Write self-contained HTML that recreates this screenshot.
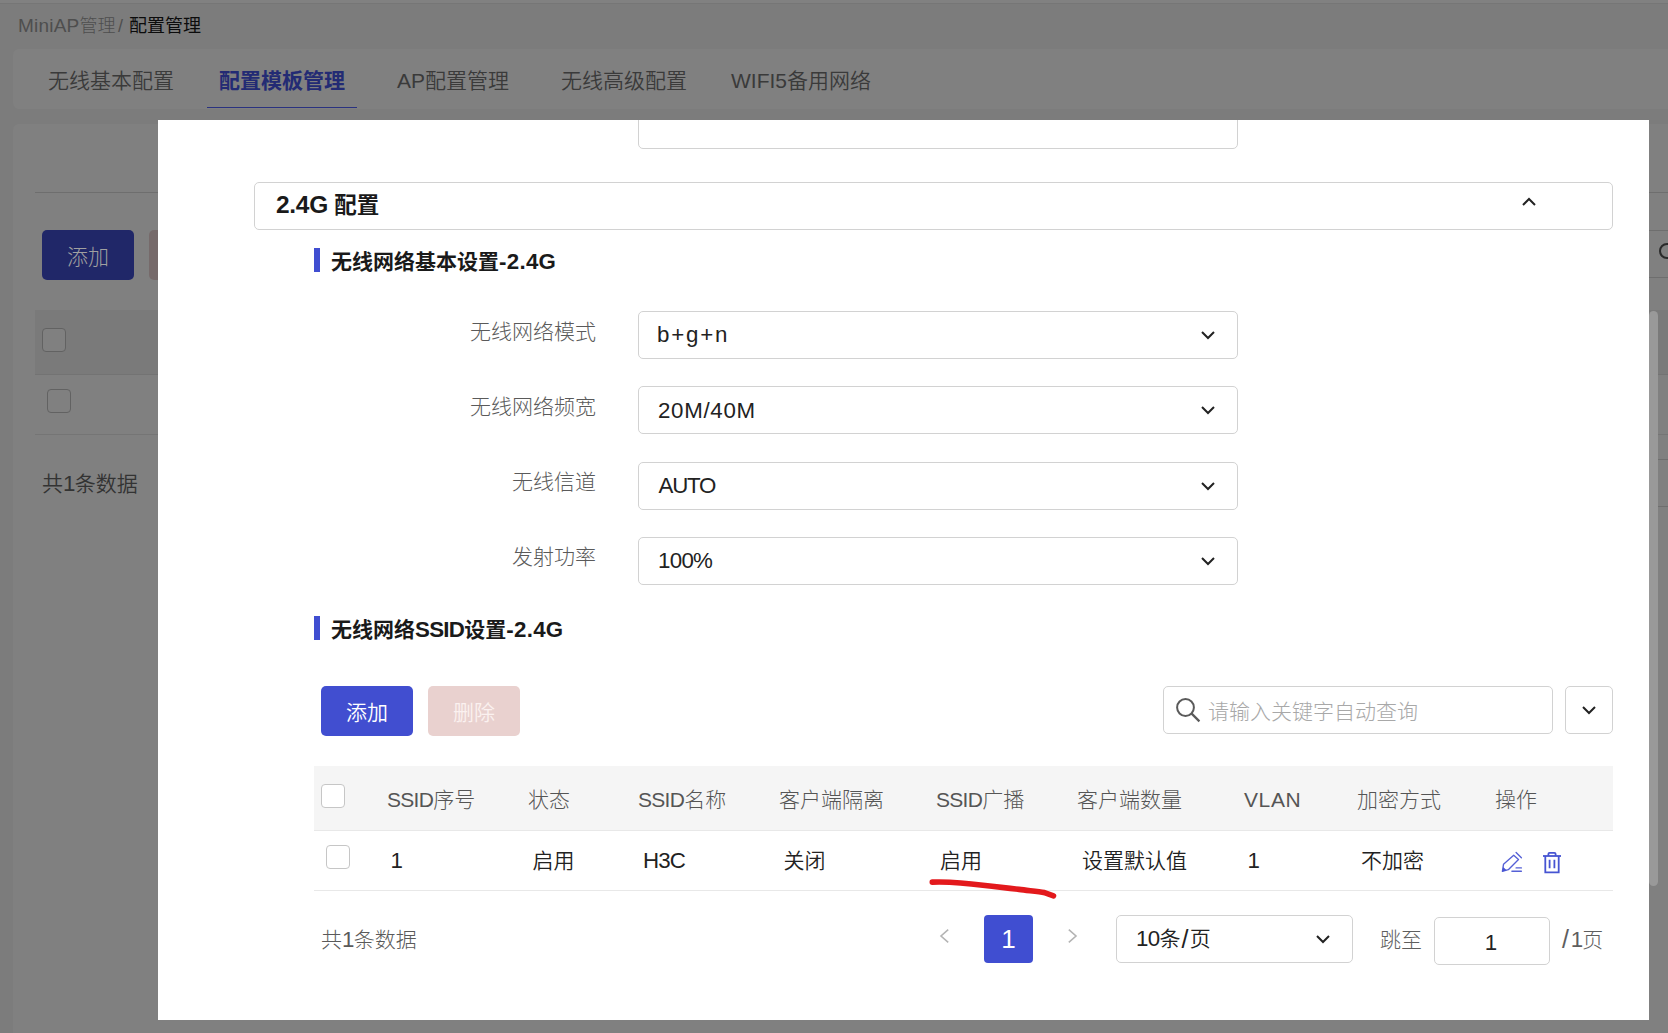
<!DOCTYPE html>
<html lang="zh-CN">
<head>
<meta charset="utf-8">
<title>MiniAP管理 - 配置管理</title>
<style>
*{box-sizing:border-box;margin:0;padding:0}
html,body{width:1668px;height:1033px;overflow:hidden}
body{position:relative;background:#7c7c7c;font-family:"Liberation Sans","Noto Sans CJK SC",sans-serif;font-size:21px;font-weight:300;color:#222;line-height:1}
.abs{position:absolute}
.t{position:absolute;white-space:nowrap;line-height:30px;height:30px}
/* ---------- dimmed background page ---------- */
.topstrip{left:0;top:0;width:1668px;height:3.5px;background:#818181;border-bottom:1px solid #767676}
.crumb{font-size:18px;top:11px}
.tabcard{left:13px;top:49px;width:1668px;height:60px;background:#808080;border-radius:6px}
.tab{top:66px;color:#3a3a3a;font-weight:350}
.tab.act{color:#232b74;font-weight:bold}
.tabline{left:207px;top:106.5px;width:150px;height:1.5px;background:#2a3280}
.card{left:13px;top:124px;width:1668px;height:920px;background:#808080;border-radius:6px}
.hr{height:1px;background:#6e6e6e}
.bgbtn{left:42px;top:230px;width:92px;height:50px;border-radius:5px;background:#202768;color:#a0a0a0;text-align:center;line-height:54px}
.bgbtn2{left:149px;top:230px;width:92px;height:50px;border-radius:5px;background:#766a6a}
.bghead{left:35px;top:310px;width:1640px;height:65px;background:#7a7a7a;border-bottom:1px solid #737373}
.bgck{width:24px;height:24px;border:1px solid #626262;border-radius:4px;background:#808080}
.thumb{left:1649px;top:311px;width:9px;height:575px;background:#999;border-radius:5px}
/* ---------- modal ---------- */
.modal{left:158px;top:120px;width:1491px;height:900px;background:#fff;overflow:hidden}
.modal .t{color:#222;font-weight:350}
.box{position:absolute;border:1px solid #d2d2d2;border-radius:5px;background:#fff}
.lbl{font-weight:300 !important;color:#5a5a5a !important;text-align:right;width:200px}
.bar{width:6px;height:24px;background:#404ed1}
.h{font-weight:bold !important;font-size:21px;color:#1a1a1a !important}
.btn{font-weight:350;border-radius:5px;color:#fff;text-align:center;line-height:54px;height:50px;width:92px}
.ck{width:24px;height:24px;border:1px solid #c6c6c6;border-radius:4px;background:#fff}
.th{color:#555 !important;font-weight:300 !important}
.g{font-weight:300 !important}
.l{font-size:22.3px}
.hl{font-size:22.3px;line-height:0;letter-spacing:.3px}
svg{position:absolute;overflow:visible}
</style>
</head>
<body>
<!-- dimmed page behind the modal -->
<div class="abs topstrip"></div>
<div class="t crumb" style="left:18px;color:#4e4e4e"><span style="letter-spacing:.2px;font-size:19px">MiniAP</span>管理</div>
<div class="t crumb" style="left:118px;color:#4e4e4e">/</div>
<div class="t crumb" style="left:129px;color:#0c0c0c;font-weight:400">配置管理</div>
<div class="abs tabcard"></div>
<div class="t tab" style="left:48px">无线基本配置</div>
<div class="t tab act" style="left:219px">配置模板管理</div>
<div class="t tab" style="left:397px">AP配置管理</div>
<div class="t tab" style="left:561px">无线高级配置</div>
<div class="t tab" style="left:731px">WIFI5备用网络</div>
<div class="abs tabline"></div>
<div class="abs card"></div>
<div class="abs hr" style="left:35px;top:192px;width:1640px"></div>
<div class="abs bgbtn">添加</div>
<div class="abs bgbtn2"></div>
<div class="abs hr" style="left:1649px;top:230px;width:30px"></div>
<div class="abs hr" style="left:1649px;top:277px;width:30px"></div>
<svg style="left:1659px;top:243px" width="16" height="16"><circle cx="8" cy="8" r="7" fill="none" stroke="#2a2a2a" stroke-width="2"/></svg>
<div class="abs bghead"></div>
<div class="abs bgck" style="left:42px;top:328px"></div>
<div class="abs bgck" style="left:47px;top:389px"></div>
<div class="abs hr" style="left:35px;top:434px;width:1640px;background:#757575"></div>
<div class="abs hr" style="left:1649px;top:459px;width:30px"></div>
<div class="abs hr" style="left:1649px;top:506px;width:30px"></div>
<div class="t" style="left:42px;top:469px;color:#333;font-weight:350">共<span class="l" style="letter-spacing:-.6px">1</span>条数据</div>
<div class="abs thumb"></div>

<!-- modal -->
<div class="abs modal">
  <div class="box" style="left:480px;top:-20px;width:600px;height:49px"></div>

  <div class="box" style="left:96px;top:62px;width:1359px;height:48px"></div>
  <div class="t" style="left:118px;top:71px;font-size:22.5px;font-weight:bold !important;color:#1a1a1a"><span style="letter-spacing:-.3px;font-size:24.5px;line-height:0">2.4G</span> 配置</div>
  <svg style="left:1364px;top:77px" width="14" height="9"><path d="M1 8 L7 2 L13 8" fill="none" stroke="#222" stroke-width="2"/></svg>

  <div class="abs bar" style="left:156px;top:128px"></div>
  <div class="t h" style="left:173px;top:127px">无线网络基本设置<span class="hl">-2.4G</span></div>

  <div class="t lbl" style="left:238px;top:196.6px">无线网络模式</div>
  <div class="box" style="left:480px;top:191px;width:600px;height:48px"></div>
  <div class="t" style="left:499px;top:200px"><span class="l" style="letter-spacing:1.8px">b+g+n</span></div>
  <svg style="left:1043px;top:211px" width="14" height="9"><path d="M1 1 L7 7 L13 1" fill="none" stroke="#222" stroke-width="2"/></svg>

  <div class="t lbl" style="left:238px;top:271.9px">无线网络频宽</div>
  <div class="box" style="left:480px;top:266px;width:600px;height:48px"></div>
  <div class="t" style="left:500px;top:276px"><span class="l" style="letter-spacing:.7px">20M/40M</span></div>
  <svg style="left:1043px;top:286px" width="14" height="9"><path d="M1 1 L7 7 L13 1" fill="none" stroke="#222" stroke-width="2"/></svg>

  <div class="t lbl" style="left:238px;top:346.6px">无线信道</div>
  <div class="box" style="left:480px;top:342px;width:600px;height:48px"></div>
  <div class="t" style="left:500.5px;top:351px"><span class="l" style="letter-spacing:-1.2px">AUTO</span></div>
  <svg style="left:1043px;top:362px" width="14" height="9"><path d="M1 1 L7 7 L13 1" fill="none" stroke="#222" stroke-width="2"/></svg>

  <div class="t lbl" style="left:238px;top:421.8px">发射功率</div>
  <div class="box" style="left:480px;top:417px;width:600px;height:48px"></div>
  <div class="t" style="left:500px;top:426px"><span class="l" style="letter-spacing:-.7px">100%</span></div>
  <svg style="left:1043px;top:437px" width="14" height="9"><path d="M1 1 L7 7 L13 1" fill="none" stroke="#222" stroke-width="2"/></svg>

  <div class="abs bar" style="left:156px;top:496px"></div>
  <div class="t h" style="left:173px;top:495px">无线网络<span class="hl" style="letter-spacing:-.7px">SSID</span>设置<span class="hl">-2.4G</span></div>

  <div class="abs btn" style="left:163px;top:566px;background:#414ed0">添加</div>
  <div class="abs btn" style="left:270px;top:566px;background:#e9d1cf;color:#fbf1f0">删除</div>

  <div class="box" style="left:1005px;top:566px;width:390px;height:48px"></div>
  <svg style="left:1018px;top:578px" width="24" height="24"><circle cx="9.5" cy="9.5" r="8.4" fill="none" stroke="#5a5a5a" stroke-width="2"/><path d="M15.4 15.4 L23.4 23.4" stroke="#5a5a5a" stroke-width="2.2"/></svg>
  <div class="t" style="left:1050px;top:577px;color:#a8a8a8;font-weight:300">请输入关键字自动查询</div>
  <div class="box" style="left:1407px;top:566px;width:48px;height:48px"></div>
  <svg style="left:1424px;top:586px" width="14" height="9"><path d="M1 1 L7 7 L13 1" fill="none" stroke="#222" stroke-width="2"/></svg>

  <div class="abs" style="left:156px;top:646px;width:1299px;height:65px;background:#f5f5f5;border-bottom:1px solid #e8e8e8"></div>
  <div class="abs ck" style="left:163px;top:664px"></div>
  <div class="t th" style="left:229px;top:665px"><span style="letter-spacing:-.7px">SSID</span>序号</div>
  <div class="t th" style="left:370px;top:665px">状态</div>
  <div class="t th" style="left:480px;top:665px"><span style="letter-spacing:-.7px">SSID</span>名称</div>
  <div class="t th" style="left:621px;top:665px">客户端隔离</div>
  <div class="t th" style="left:778px;top:665px"><span style="letter-spacing:-.7px">SSID</span>广播</div>
  <div class="t th" style="left:919px;top:665px">客户端数量</div>
  <div class="t th" style="left:1086px;top:665px"><span style="letter-spacing:.6px">VLAN</span></div>
  <div class="t th" style="left:1199px;top:665px">加密方式</div>
  <div class="t th" style="left:1337px;top:665px">操作</div>

  <div class="abs ck" style="left:168px;top:725px"></div>
  <div class="t" style="left:232.5px;top:726px"><span class="l">1</span></div>
  <div class="t" style="left:374.5px;top:726px">启用</div>
  <div class="t" style="left:485px;top:726px"><span class="l" style="letter-spacing:-.9px">H3C</span></div>
  <div class="t" style="left:625.5px;top:726px">关闭</div>
  <div class="t" style="left:782px;top:726px">启用</div>
  <div class="t" style="left:924px;top:726px">设置默认值</div>
  <div class="t" style="left:1089.5px;top:726px"><span class="l">1</span></div>
  <div class="t" style="left:1203px;top:726px">不加密</div>
  <svg style="left:1344px;top:732px" width="20" height="20"><g fill="none" stroke="#5560d6" stroke-width="1.35" stroke-linejoin="round" stroke-linecap="round"><path d="M11.7 3.3 L16.5 7.5 L6.3 17.7 L0.4 19.4 L1.5 12.3 Z"/><path d="M14.1 0.5 L19.4 5.7"/><path d="M14.1 15.9 H19.4 M9.9 19.2 H19.4"/></g><path d="M0.4 19.4 L1.2 15 L4.6 18.2 Z" fill="#4654d2"/></svg>
  <svg style="left:1385px;top:732px" width="18" height="21"><g fill="none" stroke="#4654d2" stroke-width="1.8"><path d="M0 4 H18"/><path d="M2.3 4 V20.4 H15.7 V4"/><path d="M5.4 4 V2 Q5.4 0.8 6.6 0.8 H11.4 Q12.6 0.8 12.6 2 V4"/><path d="M6.6 7.8 V16.2 M11.4 7.8 V16.2"/></g></svg>
  <div class="abs" style="left:156px;top:770px;width:1299px;height:1px;background:#e8e8e8"></div>

  <svg style="left:0;top:0" width="10" height="10"><path d="M774.3 762.1 C 784 761.8, 795 762.3, 802.5 763 C 813 764, 824 765.2, 834 766.3 C 844 767.4, 852 768.3, 861 769.4 C 870 770.5, 880 771.9, 886.5 772.6 L 895.5 775.8" fill="none" stroke="#e3191c" stroke-width="5.6" stroke-linecap="round" stroke-linejoin="round"/></svg>

  <div class="t g" style="left:163px;top:805px;color:#5a5a5a">共<span class="l" style="letter-spacing:-.6px">1</span>条数据</div>
  <div class="abs" style="left:826px;top:795px;width:49px;height:48px;border-radius:4px;background:#404ed1;color:#fff;text-align:center;line-height:48px;font-size:26px;font-weight:400">1</div>
  <svg style="left:782px;top:809px" width="9" height="14"><path d="M8.2 0.6 L1 7 L8.2 13.4" fill="none" stroke="#b4b4b4" stroke-width="1.6"/></svg>
  <svg style="left:910px;top:809px" width="9" height="14"><path d="M0.8 0.6 L8 7 L0.8 13.4" fill="none" stroke="#b4b4b4" stroke-width="1.6"/></svg>
  <div class="box" style="left:958px;top:795px;width:237px;height:48px"></div>
  <div class="t" style="left:978px;top:804px"><span class="l" style="letter-spacing:-.6px">10</span>条<span style="font-size:25px;line-height:0;padding:0 1.2px 0 1px;position:relative;top:2px">/</span>页</div>
  <svg style="left:1158px;top:815px" width="14" height="9"><path d="M1 1 L7 7 L13 1" fill="none" stroke="#222" stroke-width="2"/></svg>
  <div class="t g" style="left:1222px;top:805px;color:#5e5e5e">跳至</div>
  <div class="box" style="left:1276px;top:797px;width:116px;height:48px"></div>
  <div class="t" style="left:1275px;top:808px;width:116px;text-align:center"><span class="l">1</span></div>
  <div class="t g" style="left:1403.5px;top:805px;color:#5e5e5e"><span style="font-size:25px;line-height:0;padding:0 1.8px 0 .4px;position:relative;top:1px">/</span><span class="l" style="letter-spacing:-.8px">1</span>页</div>
</div>
</body>
</html>
